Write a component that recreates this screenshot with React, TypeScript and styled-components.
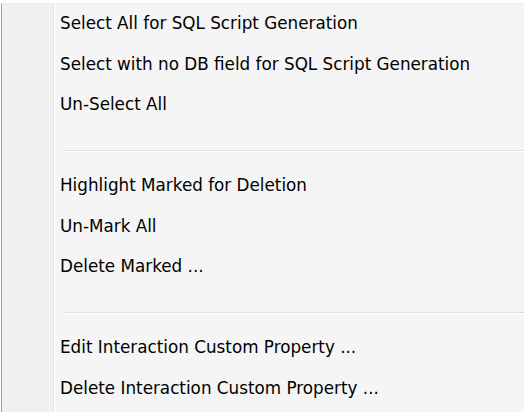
import * as React from 'react';
import styled, { createGlobalStyle } from 'styled-components';

const GlobalStyle = createGlobalStyle`
  html, body {
    margin: 0;
    padding: 0;
    background: #ffffff;
  }
`;

const Menu = styled.div`
  margin: 3px 0 0 1px;
  height: 408px;
  display: flex;
  border-left: 1px solid #a0a0a0;
  border-top: 1px solid #ececec;
  background: #f5f5f5;
  font-family: "DejaVu Sans", Tahoma, sans-serif;
  font-size: 16.8px;
  color: #000;
`;

const Gutter = styled.div`
  width: 51px;
  flex: none;
  background: #f0f0f0;
  border-right: 1px solid #e2e2e2;
  box-shadow: 1px 0 0 #ffffff;
`;

const Items = styled.div`
  flex: 1;
  display: flex;
  flex-direction: column;
  padding-left: 6px;
`;

const Item = styled.div`
  box-sizing: border-box;
  height: 40.5px;
  padding-bottom: 2px;
  display: flex;
  align-items: center;
  white-space: nowrap;
  cursor: default;
`;

const Separator = styled.div`
  height: 40.5px;
  margin-left: 3px;
  display: flex;
  flex-direction: column;
  padding-top: 24px;
  box-sizing: border-box;

  &::after {
    content: '';
    height: 1px;
    background: #e0e0e0;
    box-shadow: 0 1px 0 #ffffff;
  }
`;

const groups = [
  [
    'Select All for SQL Script Generation',
    'Select with no DB field for SQL Script Generation',
    'Un-Select All',
  ],
  ['Highlight Marked for Deletion', 'Un-Mark All', 'Delete Marked ...'],
  ['Edit Interaction Custom Property ...', 'Delete Interaction Custom Property ...'],
];

export default function App() {
  return (
    <>
      <GlobalStyle />
      <Menu>
        <Gutter />
        <Items>
          {groups.map((group, gi) => (
            <React.Fragment key={gi}>
              {gi > 0 && <Separator />}
              {group.map((label) => (
                <Item key={label}>{label}</Item>
              ))}
            </React.Fragment>
          ))}
        </Items>
      </Menu>
    </>
  );
}
